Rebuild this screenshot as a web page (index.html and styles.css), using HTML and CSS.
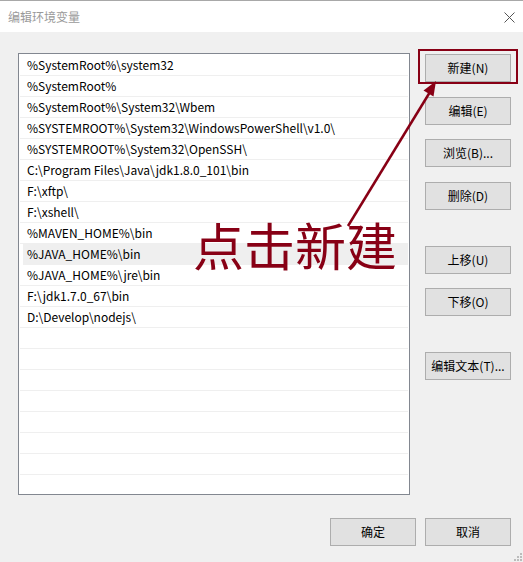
FILE: index.html
```html
<!DOCTYPE html>
<html lang="zh-CN">
<head>
<meta charset="utf-8">
<title>编辑环境变量</title>
<link rel="stylesheet" href="styles.css">
</head>
<body>
<div class="window">
  <div class="titlebar">
    <span class="title">编辑环境变量</span>
    <svg class="close" width="11" height="11" viewBox="0 0 11 11"><path d="M0.5 0.5 L10.5 10.5 M10.5 0.5 L0.5 10.5" stroke="#555" stroke-width="1" fill="none"/></svg>
  </div>
  <div class="content">
    <div class="main">
      <div class="listbox">
        <div class="row">%SystemRoot%\system32</div>
        <div class="row">%SystemRoot%</div>
        <div class="row">%SystemRoot%\System32\Wbem</div>
        <div class="row">%SYSTEMROOT%\System32\WindowsPowerShell\v1.0\</div>
        <div class="row">%SYSTEMROOT%\System32\OpenSSH\</div>
        <div class="row">C:\Program Files\Java\jdk1.8.0_101\bin</div>
        <div class="row">F:\xftp\</div>
        <div class="row">F:\xshell\</div>
        <div class="row">%MAVEN_HOME%\bin</div>
        <div class="row row-hover">%JAVA_HOME%\bin</div>
        <div class="row">%JAVA_HOME%\jre\bin</div>
        <div class="row">F:\jdk1.7.0_67\bin</div>
        <div class="row">D:\Develop\nodejs\</div>
        <div class="row"></div>
        <div class="row"></div>
        <div class="row"></div>
        <div class="row"></div>
        <div class="row"></div>
        <div class="row"></div>
        <div class="row"></div>
        <div class="row"></div>
      </div>
      <div class="side">
        <button class="btn btn-new">新建(N)</button>
        <button class="btn gap-15">编辑(E)</button>
        <button class="btn gap-14">浏览(B)...</button>
        <button class="btn gap-15">删除(D)</button>
        <button class="btn gap-36">上移(U)</button>
        <button class="btn gap-14">下移(O)</button>
        <button class="btn gap-36">编辑文本(T)...</button>
      </div>
    </div>
    <div class="footer">
      <button class="btn">确定</button>
      <button class="btn">取消</button>
    </div>
  </div>

  <div class="mark-rect"></div>
  <div class="mark-text">点击新建</div>
  <svg class="mark-arrow" width="523" height="562" viewBox="0 0 523 562">
    <line x1="348" y1="226" x2="430" y2="92" stroke="#880015" stroke-width="2.5"/>
    <polygon points="436,81 433.5,96.5 423.5,90.5" fill="#880015"/>
  </svg>
  <svg class="grip" width="10" height="10" viewBox="0 0 10 10">
    <rect x="7" y="1" width="2" height="2" fill="#bcbcbc"/>
    <rect x="4" y="4" width="2" height="2" fill="#bcbcbc"/>
    <rect x="7" y="4" width="2" height="2" fill="#bcbcbc"/>
    <rect x="1" y="7" width="2" height="2" fill="#bcbcbc"/>
    <rect x="4" y="7" width="2" height="2" fill="#bcbcbc"/>
    <rect x="7" y="7" width="2" height="2" fill="#bcbcbc"/>
  </svg>
</div>
</body>
</html>
```

FILE: styles.css
```css
* { box-sizing: border-box; }
html, body {
  margin: 0;
  padding: 0;
}
body {
  font-family: "Noto Sans CJK SC", "Noto Sans", sans-serif;
  font-size: 12px;
  color: #000;
  background: #f0f0f0;
}
.window {
  position: relative;
  width: 523px;
  height: 562px;
  border-top: 1px solid #a8a8a8;
  background: #f0f0f0;
  overflow: hidden;
}
.titlebar {
  height: 31px;
  background: #fff;
  display: flex;
  align-items: center;
  justify-content: space-between;
  padding: 0 8px 0 8px;
}
.title {
  color: #9a9a9a;
  font-size: 12px;
  margin-top: -1px;
}
.close {
  margin-top: 1px;
}
.content {
  padding: 21px 0 0 18px;
}
.main {
  display: flex;
  align-items: flex-start;
}
.listbox {
  width: 392px;
  height: 442px;
  border: 1px solid #828790;
  background: #fff;
  padding: 1px;
  overflow: hidden;
}
.row {
  height: 21px;
  border-bottom: 1px solid #efefef;
  padding-left: 7px;
  line-height: 20px;
  white-space: nowrap;
  color: #000;
}
.row-hover {
  background: #efefef;
  margin-left: 3px;
  padding-left: 4px;
}
.side {
  display: flex;
  flex-direction: column;
  margin-left: 15px;
  padding-top: 1px;
}
.btn {
  width: 86px;
  height: 28px;
  border: 1px solid #adadad;
  background: #e1e1e1;
  font-family: "Noto Sans CJK SC", "Noto Sans", sans-serif;
  font-size: 12px;
  color: #000;
  padding: 0;
  margin: 0;
  line-height: 26px;
  text-align: center;
}
.gap-14 { margin-top: 14px; }
.gap-15 { margin-top: 15px; }
.gap-36 { margin-top: 36px; }
.footer {
  display: flex;
  justify-content: flex-end;
  gap: 9px;
  margin-top: 23px;
  padding-right: 12px;
}
.mark-rect {
  position: absolute;
  left: 418px;
  top: 48px;
  width: 100px;
  height: 35px;
  border: 2px solid #880015;
}
.mark-text {
  position: absolute;
  left: 193px;
  top: 213px;
  font-family: "Noto Sans CJK SC", sans-serif;
  font-size: 51px;
  line-height: 60px;
  color: #880015;
  white-space: nowrap;
}
.mark-arrow {
  position: absolute;
  left: 0;
  top: -1px;
}
.grip {
  position: absolute;
  right: 0;
  bottom: 0;
}
```
